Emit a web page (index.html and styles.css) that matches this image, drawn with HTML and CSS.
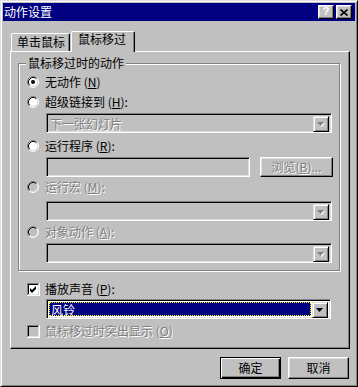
FILE: index.html
```html
<!DOCTYPE html>
<html lang="zh-CN">
<head>
    <meta charset="UTF-8">
    <title>动作设置</title>
    <link rel="stylesheet" href="styles.css">
</head>
<body>
    <svg class="defs" xmlns="http://www.w3.org/2000/svg">
        <symbol id="radio" viewBox="0 0 12 12">
            <circle cx="6" cy="6" r="4.5" fill="currentColor"/>
            <path d="M2.11 9.89A5.5 5.5 0 0 1 9.89 2.11" fill="none" stroke="#808080"/>
            <path d="M9.89 2.11A5.5 5.5 0 0 1 2.11 9.89" fill="none" stroke="#fff"/>
            <path d="M2.82 9.18A4.5 4.5 0 0 1 9.18 2.82" fill="none" stroke="#000"/>
            <path d="M9.18 2.82A4.5 4.5 0 0 1 2.82 9.18" fill="none" stroke="#dfdfdf"/>
        </symbol>
        <symbol id="check" viewBox="0 0 13 13" shape-rendering="crispEdges">
            <rect x="0" y="0" width="13" height="13" fill="#fff"/>
            <rect x="0" y="0" width="12" height="12" fill="#808080"/>
            <rect x="1" y="1" width="11" height="11" fill="#dfdfdf"/>
            <rect x="1" y="1" width="10" height="10" fill="#000"/>
            <rect x="2" y="2" width="9" height="9" fill="currentColor"/>
        </symbol>
        <symbol id="arrow" viewBox="0 0 8 5">
            <path d="M0 0h7l-3.5 4z" fill="currentColor"/>
        </symbol>
    </svg>

    <div class="window">
        <div class="titlebar">
            <span class="title">动作设置</span>
            <div class="title-buttons">
                <button class="title-btn help">?</button>
                <button class="title-btn close">
                    <svg width="8" height="7" viewBox="0 0 8 7"><path d="M0.5 0.5L7.5 6.5M7.5 0.5L0.5 6.5" stroke="#000" stroke-width="1.6"/></svg>
                </button>
            </div>
        </div>

        <div class="tabs">
            <div class="tab">单击鼠标</div>
            <div class="tab active">鼠标移过</div>
        </div>

        <div class="panel">
            <div class="group">
                <span class="legend">鼠标移过时的动作</span>

                <div class="row">
                    <span class="radio checked"><svg width="12" height="12"><use href="#radio"/></svg><i class="dot"></i></span>
                    <span class="label">无动作 (<u>N</u>)</span>
                </div>
                <div class="row">
                    <span class="radio"><svg width="12" height="12"><use href="#radio"/></svg></span>
                    <span class="label">超级链接到 (<u>H</u>):</span>
                </div>
                <div class="combo disabled first">
                    <span class="combo-text">下一张幻灯片</span>
                    <span class="drop"><svg width="8" height="5"><use href="#arrow"/></svg></span>
                </div>

                <div class="row gap3">
                    <span class="radio"><svg width="12" height="12"><use href="#radio"/></svg></span>
                    <span class="label">运行程序 (<u>R</u>):</span>
                </div>
                <div class="field-row">
                    <div class="textbox"></div>
                    <button class="btn browse" disabled>浏览(<u>B</u>)...</button>
                </div>

                <div class="row">
                    <span class="radio disabled"><svg width="12" height="12"><use href="#radio"/></svg></span>
                    <span class="label disabled">运行宏 (<u>M</u>):</span>
                </div>
                <div class="combo disabled gap3">
                    <span class="combo-text"></span>
                    <span class="drop"><svg width="8" height="5"><use href="#arrow"/></svg></span>
                </div>

                <div class="row gap1">
                    <span class="radio disabled"><svg width="12" height="12"><use href="#radio"/></svg></span>
                    <span class="label disabled">对象动作 (<u>A</u>):</span>
                </div>
                <div class="combo disabled first">
                    <span class="combo-text"></span>
                    <span class="drop"><svg width="8" height="5"><use href="#arrow"/></svg></span>
                </div>
            </div>

            <div class="row outer sound">
                <span class="checkbox"><svg width="13" height="13"><use href="#check"/></svg><svg class="tick" width="7" height="7" viewBox="0 0 7 7"><path d="M0 2l2 2 4-4v3l-4 4-2-2z" fill="#000"/></svg></span>
                <span class="label">播放声音 (<u>P</u>):</span>
            </div>
            <div class="combo sound-combo">
                <span class="combo-text selected">风铃</span>
                <span class="drop active"><svg width="8" height="5"><use href="#arrow"/></svg></span>
            </div>

            <div class="row outer highlight">
                <span class="checkbox disabled"><svg width="13" height="13"><use href="#check"/></svg></span>
                <span class="label disabled">鼠标移过时突出显示 (<u>O</u>)</span>
            </div>
        </div>

        <div class="footer">
            <button class="btn default">确定</button>
            <button class="btn">取消</button>
        </div>
    </div>
</body>
</html>
```

FILE: styles.css
```css
* {
    box-sizing: border-box;
}
html, body {
    margin: 0;
}
body {
    font-family: "Noto Sans CJK SC", "Liberation Sans", sans-serif;
    font-size: 12px;
    line-height: 12px;
    color: #000;
    background-color: #c0c0c0;
}
button {
    font: inherit;
    color: inherit;
    padding: 0;
    margin: 0;
}
.defs {
    position: absolute;
    width: 0;
    height: 0;
    overflow: hidden;
}

/* window frame */
.window {
    width: 358px;
    height: 387px;
    padding: 2px;
    background-color: #c0c0c0;
    border: 1px solid;
    border-color: #dfdfdf #000 #000 #dfdfdf;
    box-shadow: inset 1px 1px #fff, inset -1px -1px #808080;
}
.titlebar {
    height: 18px;
    background-color: #000080;
    color: #fff;
    display: flex;
    align-items: center;
    justify-content: space-between;
    padding: 0 3px 0 1px;
}
.title-buttons {
    display: flex;
    gap: 2px;
}
.title-btn {
    width: 16px;
    height: 14px;
    background-color: #c0c0c0;
    border: 1px solid;
    border-color: #fff #000 #000 #fff;
    box-shadow: inset -1px -1px #808080, inset 1px 1px #dfdfdf;
    display: flex;
    align-items: center;
    justify-content: center;
}
.help {
    font-family: "Liberation Sans", sans-serif;
    font-weight: bold;
    font-size: 11px;
    line-height: 11px;
    padding-bottom: 1px;
}

/* tabs */
.tabs {
    display: flex;
    align-items: flex-end;
    height: 20px;
    margin-top: 10px;
    padding-left: 8px;
}
.tab {
    height: 18px;
    width: 59px;
    padding: 2px 0 0 5px;
    border-top: 1px solid #fff;
    border-left: 1px solid #fff;
    border-right: 1px solid #000;
    border-radius: 2px 2px 0 0;
    box-shadow: inset -1px 0 #808080;
    white-space: nowrap;
}
.tab.active {
    position: relative;
    z-index: 1;
    height: 21px;
    width: 64px;
    margin-left: 1px;
    margin-bottom: -1px;
    padding: 1px 0 0 6px;
    background-color: #c0c0c0;
}

/* tab page */
.panel {
    width: 340px;
    height: 298px;
    margin-left: 7px;
    border: 1px solid;
    border-color: #fff #000 #000 #fff;
    box-shadow: inset -1px -1px #808080;
}
.group {
    position: relative;
    width: 322px;
    height: 208px;
    margin: 11px 0 0 7px;
    padding: 8px 0 0 8px;
    border: 1px solid #808080;
    box-shadow: inset 1px 1px #fff, 1px 1px #fff;
}
.legend {
    position: absolute;
    top: -7px;
    left: 7px;
    padding: 0 2px;
    background-color: #c0c0c0;
}

.row {
    display: flex;
    align-items: center;
    height: 20px;
}
.row.gap3 {
    margin-top: 3px;
}
.row.gap1 {
    margin-top: 1px;
}
.row.outer {
    padding-left: 16px;
}
.row.sound {
    margin-top: 8px;
}
.row.highlight {
    margin-top: 2px;
}
.radio {
    position: relative;
    width: 12px;
    height: 12px;
    margin-right: 6px;
    color: #fff;
}
.radio.disabled {
    color: #c0c0c0;
}
.radio svg, .checkbox svg {
    display: block;
}
.dot {
    position: absolute;
    left: 4px;
    top: 4px;
    width: 4px;
    height: 4px;
    border-radius: 50%;
    background-color: #000;
}
.checkbox {
    position: relative;
    width: 13px;
    height: 13px;
    margin-right: 5px;
    color: #fff;
}
.checkbox.disabled {
    color: #c0c0c0;
}
.tick {
    position: absolute;
    left: 3px;
    top: 3px;
}
.label u {
    text-decoration: underline;
}
.disabled .label,
.label.disabled,
.combo.disabled .combo-text,
.btn:disabled {
    color: #808080;
    text-shadow: 1px 1px #fff;
}

/* combo boxes and fields */
.combo {
    display: flex;
    width: 286px;
    height: 20px;
    margin-left: 19px;
    padding: 2px;
    background-color: #fff;
    border: 1px solid;
    border-color: #808080 #fff #fff #808080;
    box-shadow: inset 1px 1px #000, inset -1px -1px #dfdfdf;
}
.combo.disabled {
    background-color: #c0c0c0;
}
.combo.first {
    margin-top: 1px;
}
.combo.gap3 {
    margin-top: 4px;
}
.combo-text {
    flex: 1;
    padding: 2px 0 0 1px;
    white-space: nowrap;
}
.combo-text.selected {
    margin-right: 1px;
    padding: 1px 0 0 1px;
    color: #fff;
    background-color: #000080;
    border: 1px dotted #ffff00;
}
.drop {
    width: 16px;
    height: 16px;
    display: flex;
    align-items: center;
    justify-content: center;
    background-color: #c0c0c0;
    border: 1px solid;
    border-color: #dfdfdf #000 #000 #dfdfdf;
    box-shadow: inset 1px 1px #fff, inset -1px -1px #808080;
    color: #808080;
}
.drop svg {
    filter: drop-shadow(1px 1px 0 #fff);
}
.drop.active {
    color: #000;
}
.drop.active svg {
    filter: none;
}
.sound-combo {
    margin-left: 35px;
    width: 285px;
}
.field-row {
    display: flex;
    gap: 10px;
    margin: 1px 0 0 19px;
}
.textbox {
    width: 204px;
    height: 20px;
    background-color: #c0c0c0;
    border: 1px solid;
    border-color: #808080 #fff #fff #808080;
    box-shadow: inset 1px 1px #000, inset -1px -1px #dfdfdf;
}

/* push buttons */
.btn {
    width: 61px;
    height: 22px;
    background-color: #c0c0c0;
    border: 1px solid;
    border-color: #fff #000 #000 #fff;
    box-shadow: inset -1px -1px #808080, inset 1px 1px #dfdfdf;
    white-space: nowrap;
}
.btn.browse {
    width: 73px;
    height: 20px;
}
.btn.default {
    border-color: #000;
    box-shadow: inset 1px 1px #fff, inset -1px -1px #000, inset -2px -2px #808080;
}
.footer {
    display: flex;
    justify-content: flex-end;
    gap: 7px;
    margin-top: 8px;
    padding-right: 6px;
}
```
